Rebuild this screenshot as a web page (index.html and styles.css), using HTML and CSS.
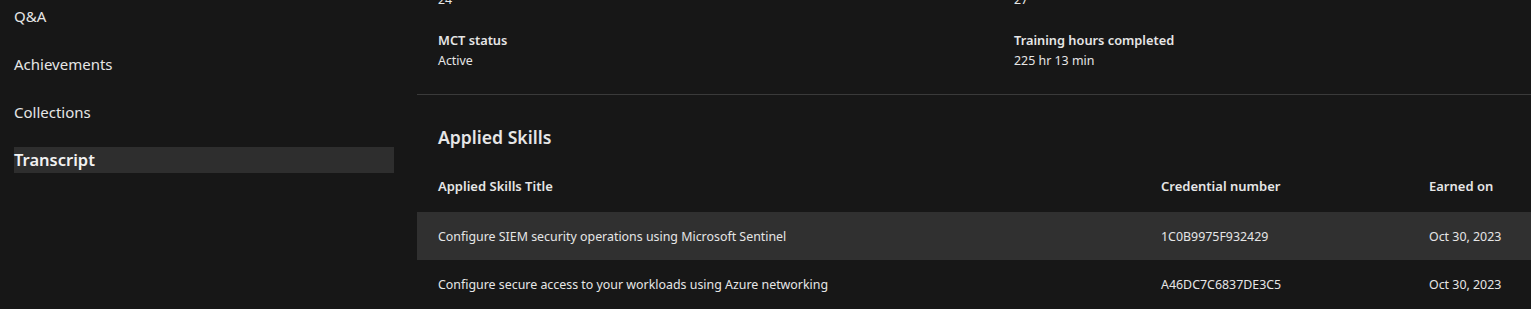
FILE: index.html
```html
<!DOCTYPE html>
<html lang="en">
<head>
  <meta charset="UTF-8">
  <title>Transcript</title>
  <link rel="stylesheet" href="styles.css">
</head>
<body>
  <div class="page">
    <nav class="sidebar">
      <a class="nav-item">Q&amp;A</a>
      <a class="nav-item">Achievements</a>
      <a class="nav-item">Collections</a>
      <a class="nav-item active">Transcript</a>
    </nav>

    <main class="content">
      <section class="stats">
        <div class="stat">
          <div class="stat-label">Modules completed</div>
          <div class="stat-value">24</div>
        </div>
        <div class="stat">
          <div class="stat-label">Learning paths completed</div>
          <div class="stat-value">27</div>
        </div>
        <div class="stat">
          <div class="stat-label">MCT status</div>
          <div class="stat-value">Active</div>
        </div>
        <div class="stat">
          <div class="stat-label">Training hours completed</div>
          <div class="stat-value">225 hr 13 min</div>
        </div>
      </section>

      <section class="skills">
        <h2>Applied Skills</h2>
        <div class="table">
          <div class="row head">
            <div>Applied Skills Title</div>
            <div>Credential number</div>
            <div>Earned on</div>
          </div>
          <div class="row shaded">
            <div>Configure SIEM security operations using Microsoft Sentinel</div>
            <div>1C0B9975F932429</div>
            <div>Oct 30, 2023</div>
          </div>
          <div class="row">
            <div>Configure secure access to your workloads using Azure networking</div>
            <div>A46DC7C6837DE3C5</div>
            <div>Oct 30, 2023</div>
          </div>
        </div>
      </section>
    </main>
  </div>
</body>
</html>
```

FILE: styles.css
```css
* { box-sizing: border-box; }

body {
  margin: 0;
  background: #171717;
  color: #e6e6e6;
  font-family: "Segoe UI", "Noto Sans", sans-serif;
  overflow: hidden;
}

.page {
  display: flex;
  align-items: flex-start;
}

/* left navigation */
.sidebar {
  width: 417px;
  flex: none;
  padding: 3px 23px 0 14px;
  display: flex;
  flex-direction: column;
  gap: 22px;
}

.nav-item {
  display: block;
  font-size: 15px;
  line-height: 26px;
  color: #e6e6e6;
}

.nav-item.active {
  background: #2e2e2e;
  font-size: 16.5px;
  font-weight: 600;
  color: #f2f2f2;
}

/* main column */
.content {
  flex: 1;
}

.stats {
  margin-top: -31px;
  padding: 0 21px 23px;
  display: grid;
  grid-template-columns: 576px 1fr;
  row-gap: 20px;
  border-bottom: 1px solid #3a3a3a;
}

.stat-label {
  font-size: 12.8px;
  font-weight: 600;
  line-height: 20px;
}

.stat-value {
  font-size: 12.4px;
  line-height: 20px;
  margin-top: 1px;
}

.skills h2 {
  margin: 30px 21px 0;
  font-size: 17.6px;
  font-weight: 600;
  line-height: 24px;
}

.table {
  margin-top: 15px;
}

.row {
  display: grid;
  grid-template-columns: 723px 268px 1fr;
  padding-left: 21px;
  height: 48px;
  align-items: center;
  font-size: 12.4px;
}

.row.head {
  font-size: 13px;
  font-weight: 600;
  padding-bottom: 4px;
}

.row.shaded {
  background: #303030;
}
```
